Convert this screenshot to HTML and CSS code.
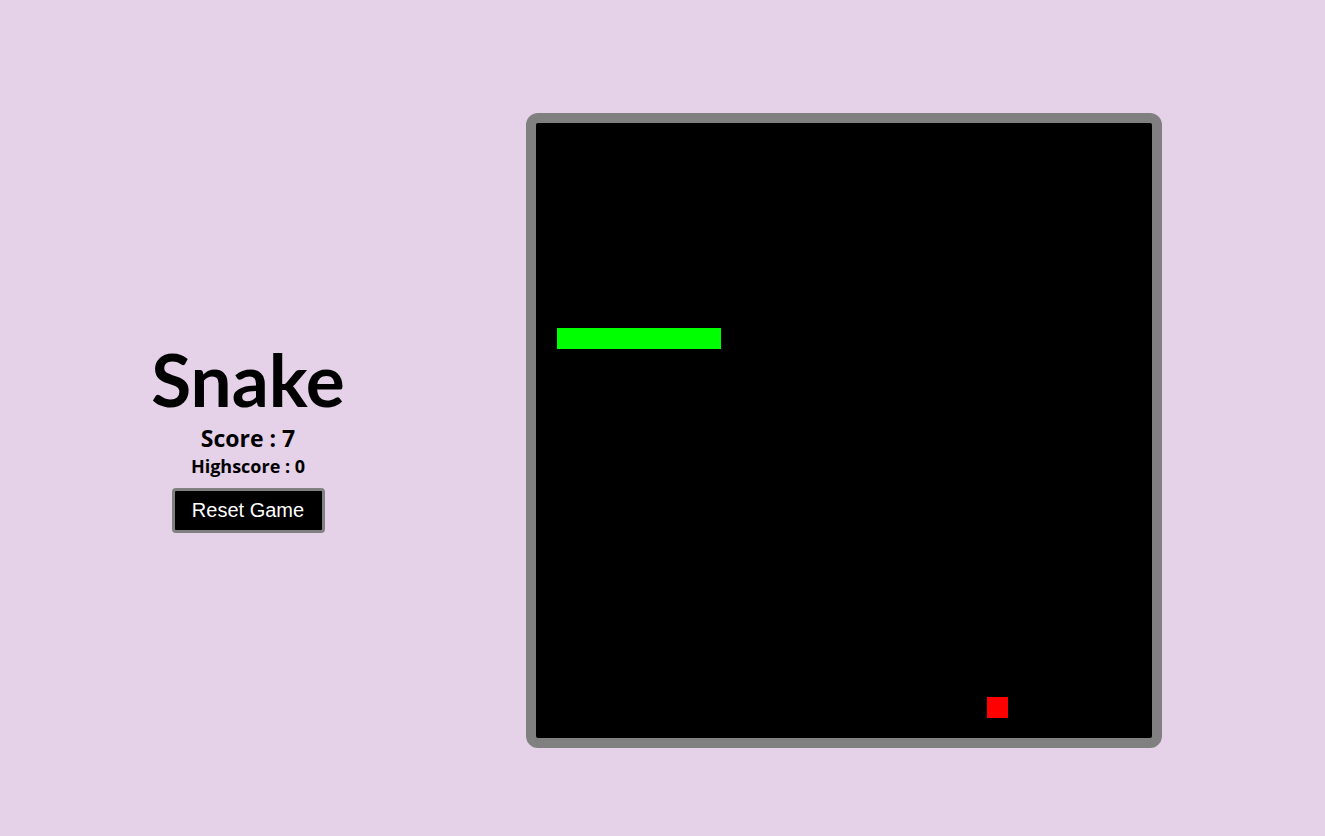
FILE: index.html
```html
<!DOCTYPE html>
<html>
<head>
<meta charset="utf-8">
<link rel="stylesheet" href="styles.css">
<title>Snake</title>
</head>
<body>
<main class="page">
  <section class="panel">
    <h1 class="title">Snake</h1>
    <div class="score">Score : 7</div>
    <div class="highscore">Highscore : 0</div>
    <button class="reset">Reset Game</button>
  </section>
  <section class="board">
    <div class="grid">
      <div class="snake" style="grid-row: 11; grid-column: 2 / span 8;"></div>
      <div class="food" style="grid-row: 29; grid-column: 23;"></div>
    </div>
  </section>
</main>
</body>
</html>
```
FILE: styles.css
```css
html, body {
  margin: 0;
  padding: 0;
  background: #e5d1e8;
}
.page {
  display: grid;
  grid-template-columns: 496px 636px;
  column-gap: 30px;
  padding-top: 113px;
  align-items: center;
}
.panel {
  display: flex;
  flex-direction: column;
  align-items: center;
  padding-top: 10px;
  font-family: Lato, "Noto Sans", sans-serif;
  color: #000;
}
.title {
  margin: 0;
  font-size: 73px;
  font-weight: 700;
  line-height: 80px;
}
.score {
  font-family: "Open Sans", "Noto Sans", sans-serif;
  font-size: 23px;
  font-weight: 700;
  line-height: 28px;
  margin-top: 5px;
}
.highscore {
  font-family: "Open Sans", "Noto Sans", sans-serif;
  font-size: 18px;
  font-weight: 700;
  line-height: 22px;
  margin-top: 3px;
}
.reset {
  margin-top: 11px;
  background: #000;
  color: #fff;
  border: 3px solid #808080;
  border-radius: 4px;
  font-family: "Liberation Sans", Arial, sans-serif;
  font-size: 20px;
  line-height: 23px;
  padding: 8px 17px;
  width: 153px;
  height: 45px;
}
.board {
  width: 636px;
  height: 635px;
  box-sizing: border-box;
  border: 10px solid #808080;
  border-radius: 12px;
  background: #000;
}
.grid {
  width: 615px;
  height: 615px;
  display: grid;
  grid-template-columns: repeat(30, 1fr);
  grid-template-rows: repeat(30, 1fr);
}
.snake {
  background: #00ff00;
}
.food {
  background: #ff0000;
}
```
